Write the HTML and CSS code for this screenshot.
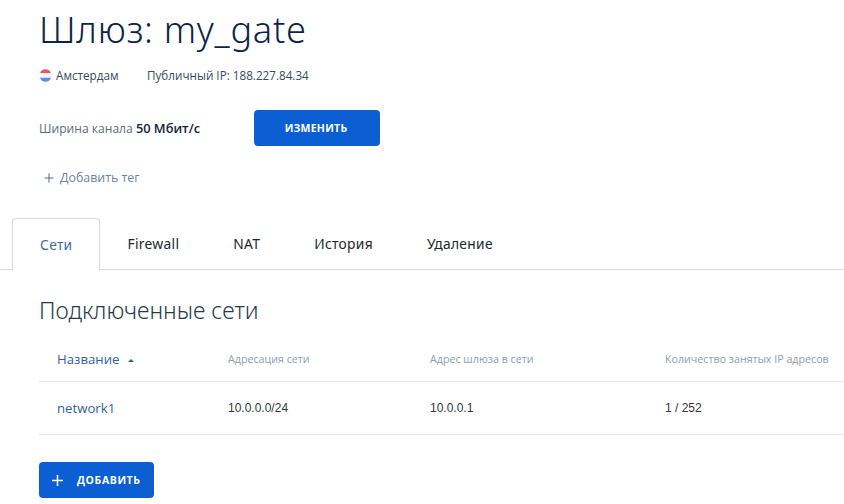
FILE: index.html
```html
<!DOCTYPE html>
<html lang="en">
<head>
    <meta charset="UTF-8">
    <meta name="viewport" content="width=device-width, initial-scale=1.0">
    <link rel="stylesheet" href="styles.css">
</head>
<body>
    <div class="header">
        <h1 class="title">Шлюз: my_gate</h1>
        <div class="meta">
            <span class="region">
                <svg class="flag" width="13" height="13" viewBox="0 0 13 13">
                    <path d="M1 4.2A5.8 5.8 0 0 1 12 4.2Z" fill="#e0596a"/>
                    <path d="M.7 4.2H12.3V8.8H.7Z" fill="#f4f5f8"/>
                    <path d="M1 8.8H12A5.8 5.8 0 0 1 1 8.8Z" fill="#5b8de0"/>
                </svg>
                Амстердам
            </span>
            <span class="public-ip">Публичный IP: 188.227.84.34</span>
        </div>
        <div class="bandwidth">
            <span class="bandwidth-label">Ширина канала <b>50 Мбит/с</b></span>
            <button class="btn btn-change">ИЗМЕНИТЬ</button>
        </div>
        <div class="add-tag">
            <svg class="add-tag-plus" width="10" height="10" viewBox="0 0 10 10">
                <path d="M5 .5V9.5M.5 5H9.5" stroke="#4a6c94" fill="none"/>
            </svg>
            Добавить тег
        </div>
    </div>

    <div class="tabs">
        <div class="tab active">Сети</div>
        <div class="tab">Firewall</div>
        <div class="tab">NAT</div>
        <div class="tab">История</div>
        <div class="tab">Удаление</div>
    </div>

    <div class="content">
        <h2 class="section-title">Подключенные сети</h2>
        <div class="table">
            <div class="row head">
                <div class="sort">Название <span class="arrow"></span></div>
                <div>Адресация сети</div>
                <div>Адрес шлюза в сети</div>
                <div>Количество занятых IP адресов</div>
            </div>
            <div class="row">
                <div class="net-link">network1</div>
                <div>10.0.0.0/24</div>
                <div>10.0.0.1</div>
                <div>1 / 252</div>
            </div>
        </div>
        <button class="btn btn-add">
            <svg class="btn-plus" width="11" height="11" viewBox="0 0 11 11">
                <path d="M5.5 0V11M0 5.5H11" stroke="white" stroke-width="1.5" fill="none"/>
            </svg>
            ДОБАВИТЬ
        </button>
    </div>
</body>
</html>
```

FILE: styles.css
```css
body {
    margin: 0;
    background-color: white;
    font-family: "Open Sans", Arial, sans-serif;
    color: #0f2540;
    overflow: hidden;
}

.header {
    padding: 5px 0 0 39px;
}

.title {
    margin: 0;
    font-family: "Noto Sans", sans-serif;
    font-size: 36.2px;
    line-height: 48px;
    font-weight: 300;
    letter-spacing: 0.75px;
    color: #0c2447;
}

.meta {
    display: flex;
    margin-top: 14px;
    font-size: 11.7px;
    line-height: 16px;
    color: #3a4a5a;
}

.region {
    display: flex;
    align-items: center;
    gap: 4px;
    width: 108px;
}

.bandwidth {
    display: flex;
    align-items: center;
    margin-top: 27px;
    font-size: 12.1px;
}

.bandwidth-label {
    width: 215px;
    color: #606c78;
}

.bandwidth-label b {
    font-size: 12.8px;
    font-weight: 600;
    color: #10233a;
}

.btn {
    border: none;
    border-radius: 4px;
    background-color: #0b5fd3;
    color: white;
    font-family: "Open Sans", Arial, sans-serif;
    font-weight: 700;
    font-size: 10.5px;
    letter-spacing: 0.6px;
}

.btn-change {
    width: 126px;
    height: 36px;
    padding: 0 8px 0 6px;
    letter-spacing: 0.25px;
}

.add-tag {
    display: flex;
    align-items: center;
    gap: 6px;
    margin: 23px 0 0 5px;
    font-size: 12.4px;
    line-height: 18px;
    color: #6a84a3;
}

.tabs {
    display: flex;
    height: 51px;
    margin-top: 31px;
    padding-left: 12px;
    border-bottom: 1px solid #d9dcdf;
}

.tab {
    padding: 0 27px;
    font-family: "Noto Sans", sans-serif;
    font-size: 13.8px;
    line-height: 51px;
    letter-spacing: 0.3px;
    color: #20282e;
}

.tab.active {
    height: 51px;
    border: 1px solid #d9dcdf;
    border-bottom: 1px solid white;
    border-radius: 4px 4px 0 0;
    color: #3f6aa6;
    background-color: white;
}

.content {
    padding-left: 39px;
}

.section-title {
    margin: 26px 0 0;
    font-family: "Noto Sans", sans-serif;
    font-size: 23px;
    line-height: 29px;
    font-weight: 300;
    color: #263a4c;
}

.table {
    margin-top: 14px;
}

.row {
    display: grid;
    grid-template-columns: 171px 202px 235px 1fr;
    align-items: center;
    height: 52px;
    padding-left: 18px;
    border-bottom: 1px solid #e4e8ec;
    font-family: "Liberation Sans", Arial, sans-serif;
    font-size: 12px;
    color: #30373d;
}

.row.head {
    height: 40px;
    padding-bottom: 2px;
    font-family: "Open Sans", Arial, sans-serif;
    font-size: 10.7px;
    color: #929da9;
}

.sort {
    font-size: 13.2px;
    color: #2f5f9e;
}

.arrow {
    display: inline-block;
    margin: 0 0 2px 5px;
    border-left: 3px solid transparent;
    border-right: 3px solid transparent;
    border-bottom: 3px solid #2f5f9e;
}

.net-link {
    font-family: "Open Sans", Arial, sans-serif;
    font-size: 13.2px;
    color: #2f5f9e;
}

.btn-add {
    display: flex;
    align-items: center;
    width: 115px;
    height: 36px;
    margin-top: 27px;
    padding: 0 0 0 13px;
}

.btn-plus {
    margin-right: 14px;
}
```
